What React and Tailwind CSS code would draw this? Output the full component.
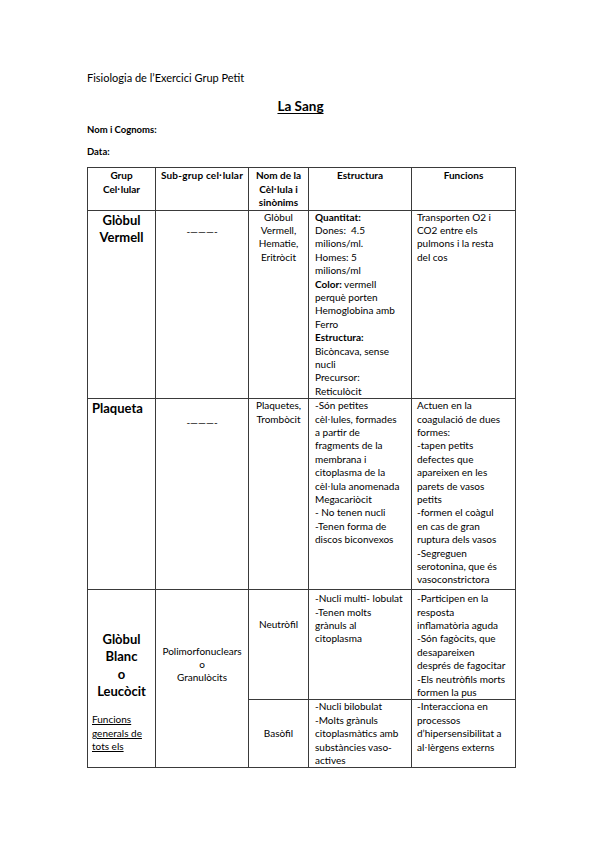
const Ln = ({ children, className = '' }) => (
  <div className={`whitespace-nowrap ${className}`}>{children}</div>
);

const box = 'border border-[#3a3a3a] p-0';
const cell = `${box} align-top`;

const Dot = () => <span style={{ fontFamily: '"Liberation Sans", sans-serif' }}>·</span>;
const ll = (a, b) => (
  <>
    {a}l<Dot />l{b}
  </>
);

export default function App() {
  return (
    <div
      className="min-h-[848px] w-[599px] bg-white text-black"
      style={{ fontFamily: 'Lato, "Open Sans", sans-serif' }}
    >
      <div className="pl-[87px] pt-[71px]">
        <div className="text-[11px] leading-[14px]">Fisiologia de l’Exercici Grup Petit</div>
        <div className="mt-[13px] w-[427px] text-center text-[13.5px] font-bold leading-[16px]">
          <span className="underline underline-offset-2">La Sang</span>
        </div>
        <div className="mt-[10px] text-[9.5px] font-bold leading-[12px]">Nom i Cognoms:</div>
        <div className="mt-[10px] text-[9.5px] font-bold leading-[12px]">Data:</div>

        <table className="mt-[9px] w-[428px] table-fixed border-collapse text-[10px] leading-[13.4px]">
          <colgroup>
            <col className="w-[68px]" />
            <col className="w-[93px]" />
            <col className="w-[60px]" />
            <col className="w-[103px]" />
            <col className="w-[104px]" />
          </colgroup>
          <tbody>
            <tr className="h-[42px]">
              <td className={`${cell} pt-[1px] text-center font-bold leading-[13.5px]`}>
                <Ln>Grup</Ln>
                <Ln>{ll('Ce', 'ular')}</Ln>
              </td>
              <td className={`${cell} pt-[1px] text-center font-bold leading-[13.5px] tracking-[0.2px]`}>
                <Ln>Sub-grup {ll('ce', 'ular')}</Ln>
              </td>
              <td className={`${cell} pt-[1px] text-center font-bold leading-[13.5px]`}>
                <Ln>Nom de la</Ln>
                <Ln>{ll('Cè', 'ula')} i</Ln>
                <Ln>sinònims</Ln>
              </td>
              <td className={`${cell} pt-[1px] text-center font-bold leading-[13.5px]`}>
                <Ln>Estructura</Ln>
              </td>
              <td className={`${cell} pt-[1px] text-center font-bold leading-[13.5px]`}>
                <Ln>Funcions</Ln>
              </td>
            </tr>

            <tr className="h-[188px]">
              <td className={`${cell} pt-[1px] text-center text-[13px] font-bold leading-[17px]`}>
                <Ln>Glòbul</Ln>
                <Ln>Vermell</Ln>
              </td>
              <td className={`${cell} pt-[14px] text-center`}>
                <Ln>-———-</Ln>
              </td>
              <td className={`${cell} text-center`}>
                <Ln>Glòbul</Ln>
                <Ln>Vermell,</Ln>
                <Ln>Hematie,</Ln>
                <Ln>Eritròcit</Ln>
              </td>
              <td className={`${cell} pl-[6px]`}>
                <Ln className="font-bold">Quantitat:</Ln>
                <Ln>Dones:&nbsp; 4.5</Ln>
                <Ln>milions/ml.</Ln>
                <Ln>Homes: 5</Ln>
                <Ln>milions/ml</Ln>
                <Ln><span className="font-bold">Color:</span> vermell</Ln>
                <Ln>perquè porten</Ln>
                <Ln>Hemoglobina amb</Ln>
                <Ln>Ferro</Ln>
                <Ln className="font-bold">Estructura:</Ln>
                <Ln>Bicòncava, sense</Ln>
                <Ln>nucli</Ln>
                <Ln>Precursor:</Ln>
                <Ln>Reticulòcit</Ln>
              </td>
              <td className={`${cell} pl-[5px]`}>
                <Ln>Transporten O2 i</Ln>
                <Ln>CO2 entre els</Ln>
                <Ln>pulmons i la resta</Ln>
                <Ln>del cos</Ln>
              </td>
            </tr>

            <tr className="h-[191px]">
              <td className={`${cell} pt-[1px] pl-[4px] text-[13px] font-bold leading-[17px]`}>
                <Ln>Plaqueta</Ln>
              </td>
              <td className={`${cell} pt-[17px] text-center`}>
                <Ln>-———-</Ln>
              </td>
              <td className={`${cell} text-center`}>
                <Ln>Plaquetes,</Ln>
                <Ln>Trombòcit</Ln>
              </td>
              <td className={`${cell} pl-[6px]`}>
                <Ln>-Són petites</Ln>
                <Ln>{ll('cè', 'ules')}, formades</Ln>
                <Ln>a partir de</Ln>
                <Ln>fragments de la</Ln>
                <Ln>membrana i</Ln>
                <Ln>citoplasma de la</Ln>
                <Ln>{ll('cè', 'ula')} anomenada</Ln>
                <Ln>Megacariòcit</Ln>
                <Ln>- No tenen nucli</Ln>
                <Ln>-Tenen forma de</Ln>
                <Ln>discos biconvexos</Ln>
              </td>
              <td className={`${cell} pl-[5px]`}>
                <Ln>Actuen en la</Ln>
                <Ln>coagulació de dues</Ln>
                <Ln>formes:</Ln>
                <Ln>-tapen petits</Ln>
                <Ln>defectes que</Ln>
                <Ln>apareixen en les</Ln>
                <Ln>parets de vasos</Ln>
                <Ln>petits</Ln>
                <Ln>-formen el coàgul</Ln>
                <Ln>en cas de gran</Ln>
                <Ln>ruptura dels vasos</Ln>
                <Ln>-Segreguen</Ln>
                <Ln>serotonina, que és</Ln>
                <Ln>vasoconstrictora</Ln>
              </td>
            </tr>

            <tr className="h-[109px]">
              <td rowSpan={2} className={`${cell} pt-[41px]`}>
                <div className="text-center text-[13px] font-bold leading-[17.3px]">
                  <Ln>Glòbul</Ln>
                  <Ln>Blanc</Ln>
                  <Ln>o</Ln>
                  <Ln>Leucòcit</Ln>
                </div>
                <div className="mt-[13px] pl-[4px] leading-[13.5px] underline">
                  <Ln>Funcions</Ln>
                  <Ln>generals de</Ln>
                  <Ln>tots els</Ln>
                </div>
              </td>
              <td rowSpan={2} className={`${cell} pt-[55px] text-center leading-[13px]`}>
                <Ln>Polimorfonuclears</Ln>
                <Ln>o</Ln>
                <Ln>Granulòcits</Ln>
              </td>
              <td className={`${cell} pt-[28px] text-center`}>
                <Ln>Neutròfil</Ln>
              </td>
              <td className={`${cell} pl-[6px] pt-[2px]`}>
                <Ln>-Nucli multi- lobulat</Ln>
                <Ln>-Tenen molts</Ln>
                <Ln>grànuls al</Ln>
                <Ln>citoplasma</Ln>
              </td>
              <td className={`${cell} pl-[5px] pt-[2px]`}>
                <Ln>-Participen en la</Ln>
                <Ln>resposta</Ln>
                <Ln>inflamatòria aguda</Ln>
                <Ln>-Són fagòcits, que</Ln>
                <Ln>desapareixen</Ln>
                <Ln>després de fagocitar</Ln>
                <Ln>-Els neutròfils morts</Ln>
                <Ln>formen la pus</Ln>
              </td>
            </tr>

            <tr className="h-[68px]">
              <td className={`${box} align-middle text-center`}>
                <Ln>Basòfil</Ln>
              </td>
              <td className={`${cell} pl-[6px]`}>
                <Ln>-Nucli bilobulat</Ln>
                <Ln>-Molts grànuls</Ln>
                <Ln>citoplasmàtics amb</Ln>
                <Ln>substàncies vaso-</Ln>
                <Ln>actives</Ln>
              </td>
              <td className={`${cell} pl-[5px]`}>
                <Ln>-Interacciona en</Ln>
                <Ln>processos</Ln>
                <Ln>d’hipersensibilitat a</Ln>
                <Ln>{ll('a', 'èrgens')} externs</Ln>
              </td>
            </tr>
          </tbody>
        </table>
      </div>
    </div>
  );
}
